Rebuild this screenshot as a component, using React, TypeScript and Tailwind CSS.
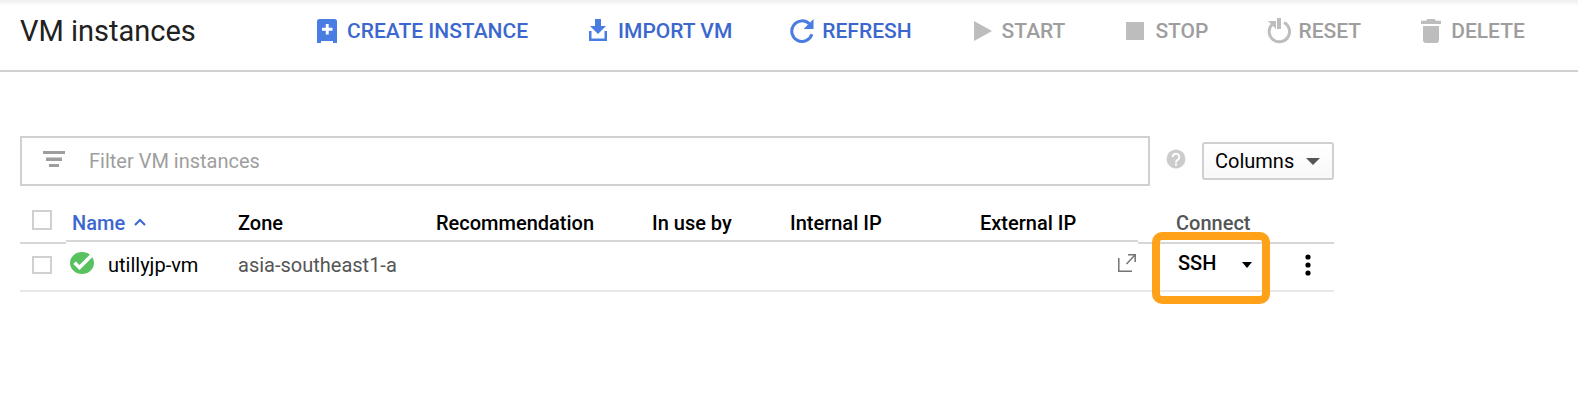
import type { ReactNode } from "react";

function ToolButton({ label, icon, disabled }: { label: string; icon: ReactNode; disabled?: boolean }) {
  return (
    <button
      type="button"
      disabled={disabled}
      className="flex shrink-0 items-center gap-2 text-[21px] leading-6 font-medium whitespace-nowrap text-[#3b67cf] disabled:text-[#9e9e9e]"
    >
      <svg viewBox="0 0 24 24" aria-hidden="true" className={disabled ? "size-6 overflow-visible text-[#bdbdbd]" : "size-6 text-[#4a7de2]"}>
        {icon}
      </svg>
      {label}
    </button>
  );
}

const createIcon = (
  <path
    fill="currentColor"
    fillRule="evenodd"
    d="M4.500 0h15q2.500 0 2.500 2.500V24h-4v-2H6v2H2V2.500Q2 0 4.500 0zM10.800 5v3.800H7v2.900h3.800v3.800h2.900v-3.800h3.800V8.800h-3.800V5z"
  />
);
const importIcon = (
  <path fill="currentColor" d="M9 0h6v7h5l-8 8-8-8h5zM3 12h2.500v7.500h13V12H21v10H3z" />
);
const refreshIcon = (
  <>
    <path fill="none" stroke="currentColor" strokeWidth="3" d="M21.900 15.300A10.300 10.300 0 1 1 19.400 4.900" />
    <path fill="currentColor" d="M23.500 0v10H13.700z" />
  </>
);
const startIcon = <path fill="currentColor" d="M4 2l18 10L4 22z" />;
const stopIcon = <path fill="currentColor" d="M3 3h18v18H3z" />;
const resetIcon = (
  <>
    <path fill="none" stroke="currentColor" strokeWidth="3" d="M17 3.500A10.200 10.200 0 1 1 5 5.500" />
    <path fill="currentColor" d="M10 -1h4v11h-4zM1 2h8v8z" />
  </>
);
const deleteIcon = (
  <path fill="currentColor" d="M8.500 0h7L17 1.700h5v3.300H2V1.700h5zM4 7h16v14q0 3-3 3H7q-3 0-3-3z" />
);

const checkboxClass = "block w-5 appearance-none border-2 border-[#d0d0d0] bg-white checked:bg-[#4a7de2]";
const middleHead = "h-[46px] border-b-2 border-[#d6d6d6] pt-[15px]";
const edgeHead = "h-12 border-b-2 border-[#d6d6d6]";
const cell = "px-0 pt-0 pb-[5px]";

export default function App() {
  return (
    <div className="bg-white font-['Roboto',sans-serif] text-black">
      <header className="flex h-[72px] items-center border-b-2 border-[#d0d0d0] bg-[linear-gradient(#eeeeee,#ffffff_6px)] pb-2 pl-5">
        <h1 className="w-[295px] shrink-0 text-[29px] leading-8 font-normal text-[#212121]">VM instances</h1>
        <nav aria-label="Instance actions" className="flex gap-[58px]">
          <ToolButton label="CREATE INSTANCE" icon={createIcon} />
          <ToolButton label="IMPORT VM" icon={importIcon} />
          <ToolButton label="REFRESH" icon={refreshIcon} />
          <ToolButton label="START" icon={startIcon} disabled />
          <ToolButton label="STOP" icon={stopIcon} disabled />
          <ToolButton label="RESET" icon={resetIcon} disabled />
          <ToolButton label="DELETE" icon={deleteIcon} disabled />
        </nav>
      </header>

      <main className="pt-16 pr-[244px] pb-12 pl-5">
        <div className="flex items-center">
          <label className="flex h-[50px] flex-1 items-center border-2 border-[#d0d0d0] pl-[21px]">
            <svg viewBox="0 0 22 18" aria-hidden="true" className="mr-6 mb-1 h-[18px] w-[22px] shrink-0">
              <path fill="#9e9e9e" d="M0 1h22v3H0zM3 7.500h16v3.500H3zM6 14h10v3H6z" />
            </svg>
            <input
              type="text"
              aria-label="Filter VM instances"
              placeholder="Filter VM instances"
              className="min-w-0 flex-1 text-[20px] leading-6 outline-none placeholder:text-[#9e9e9e]"
            />
          </label>
          <button type="button" aria-label="Help" className="mx-[17px] mb-1">
            <svg viewBox="0 0 24 24" aria-hidden="true" className="size-[18px] overflow-visible">
              <circle cx="12" cy="12" r="12.600" fill="#cccccc" />
              <path fill="none" stroke="#fff" strokeWidth="2.600" d="M7.600 9.200a4.400 4.400 0 1 1 6.900 3.700c-1.700 1.200-2.500 1.800-2.500 3.600" />
              <path fill="#fff" d="M10.600 18h2.800v2.800h-2.800z" />
            </svg>
          </button>
          <button
            type="button"
            className="flex h-[38px] w-[132px] items-center justify-between rounded-[3px] border-2 border-[#d0d0d0] bg-linear-to-b from-white to-[#f8f8f8] pr-3 pl-[11px] text-[20px] leading-6"
          >
            Columns
            <svg viewBox="0 0 14 7" aria-hidden="true" className="h-[7px] w-[14px]">
              <path fill="#555" d="M0 0h14L7 7z" />
            </svg>
          </button>
        </div>

        <table className="mt-[10px] w-full table-fixed border-collapse text-left text-[20px] leading-6">
          <colgroup>
            <col className="w-[46px]" />
            <col className="w-[172px]" />
            <col className="w-[198px]" />
            <col className="w-[216px]" />
            <col className="w-[138px]" />
            <col className="w-[190px]" />
            <col />
            <col className="w-[132px]" />
            <col className="w-16" />
          </colgroup>
          <thead>
            <tr className="align-top">
              <th className="p-0">
                <div className={`${edgeHead} pt-[14px] pl-3`}>
                  <input type="checkbox" aria-label="Select all instances" className={`${checkboxClass} h-5`} />
                </div>
              </th>
              <th className="p-0 font-medium" aria-sort="ascending">
                <div className={middleHead}>
                  <button type="button" className="flex items-center gap-[9px] pl-[6px] text-[#3b67cf]">
                    Name
                    <svg viewBox="0 0 12 8" aria-hidden="true" className="mb-0.5 h-2 w-3">
                      <path fill="none" stroke="currentColor" strokeWidth="2" d="M1 7l5-5 5 5" />
                    </svg>
                  </button>
                </div>
              </th>
              <th className="p-0 font-medium"><div className={middleHead}>Zone</div></th>
              <th className="p-0 font-medium"><div className={middleHead}>Recommendation</div></th>
              <th className="p-0 font-medium"><div className={middleHead}>In use by</div></th>
              <th className="p-0 font-medium"><div className={middleHead}>Internal IP</div></th>
              <th className="p-0 font-medium"><div className={middleHead}>External IP</div></th>
              <th className="p-0 font-medium text-[#555]"><div className={`${edgeHead} pt-[15px] pl-[38px]`}>Connect</div></th>
              <th className="p-0" aria-label="More actions"><div className={edgeHead} /></th>
            </tr>
          </thead>
          <tbody>
            <tr className="h-[47px] border-b-2 border-[#e8e8e8]">
              <td className={cell}>
                <input type="checkbox" aria-label="Select utillyjp-vm" className={`${checkboxClass} ml-3 h-[18px]`} />
              </td>
              <td className={cell}>
                <div className="flex items-center gap-[14px] pb-1 pl-1">
                  <svg viewBox="0 0 24 22" role="img" aria-label="Running" className="h-[22px] w-6">
                    <ellipse cx="12" cy="11" rx="12" ry="11" fill="#58c260" />
                    <path fill="none" stroke="#fff" strokeWidth="3.600" d="M4.500 10.800l5 4.700L21.500 3.500" />
                  </svg>
                  <a href="#utillyjp-vm" className="pt-1">utillyjp-vm</a>
                </div>
              </td>
              <td className={`${cell} text-[#555]`}>asia-southeast1-a</td>
              <td className={cell} />
              <td className={cell} />
              <td className={cell} />
              <td className={cell}>
                <a href="#external" aria-label="Open external address" className="flex justify-end pr-0.5 pb-1">
                  <svg viewBox="0 0 18 18" aria-hidden="true" className="size-[18px]">
                    <path fill="none" stroke="#757575" strokeWidth="1.500" d="M.8 4v13.200H14M8.500 10L17 1M10 .8h7.200V8" />
                  </svg>
                </a>
              </td>
              <td className={`${cell} relative`}>
                <div className="flex items-center pb-1 pl-10 font-medium">
                  <button type="button">SSH</button>
                  <button type="button" aria-label="SSH options" className="ml-[26px] pt-1">
                    <svg viewBox="0 0 10 6" aria-hidden="true" className="h-[6px] w-[10px]">
                      <path fill="#000" d="M0 0h10L5 6z" />
                    </svg>
                  </button>
                </div>
                <span className="pointer-events-none absolute -top-3 left-[14px] h-[72px] w-[118px] rounded-[10px] border-8 border-[#ffa21a]" />
              </td>
              <td className={cell}>
                <button type="button" aria-label="Instance menu" className="ml-[35px] block">
                  <svg viewBox="0 0 6 22" aria-hidden="true" className="h-[22px] w-[6px]">
                    <circle cx="3" cy="3" r="2.600" />
                    <circle cx="3" cy="11" r="2.600" />
                    <circle cx="3" cy="19" r="2.600" />
                  </svg>
                </button>
              </td>
            </tr>
          </tbody>
        </table>
      </main>
    </div>
  );
}
